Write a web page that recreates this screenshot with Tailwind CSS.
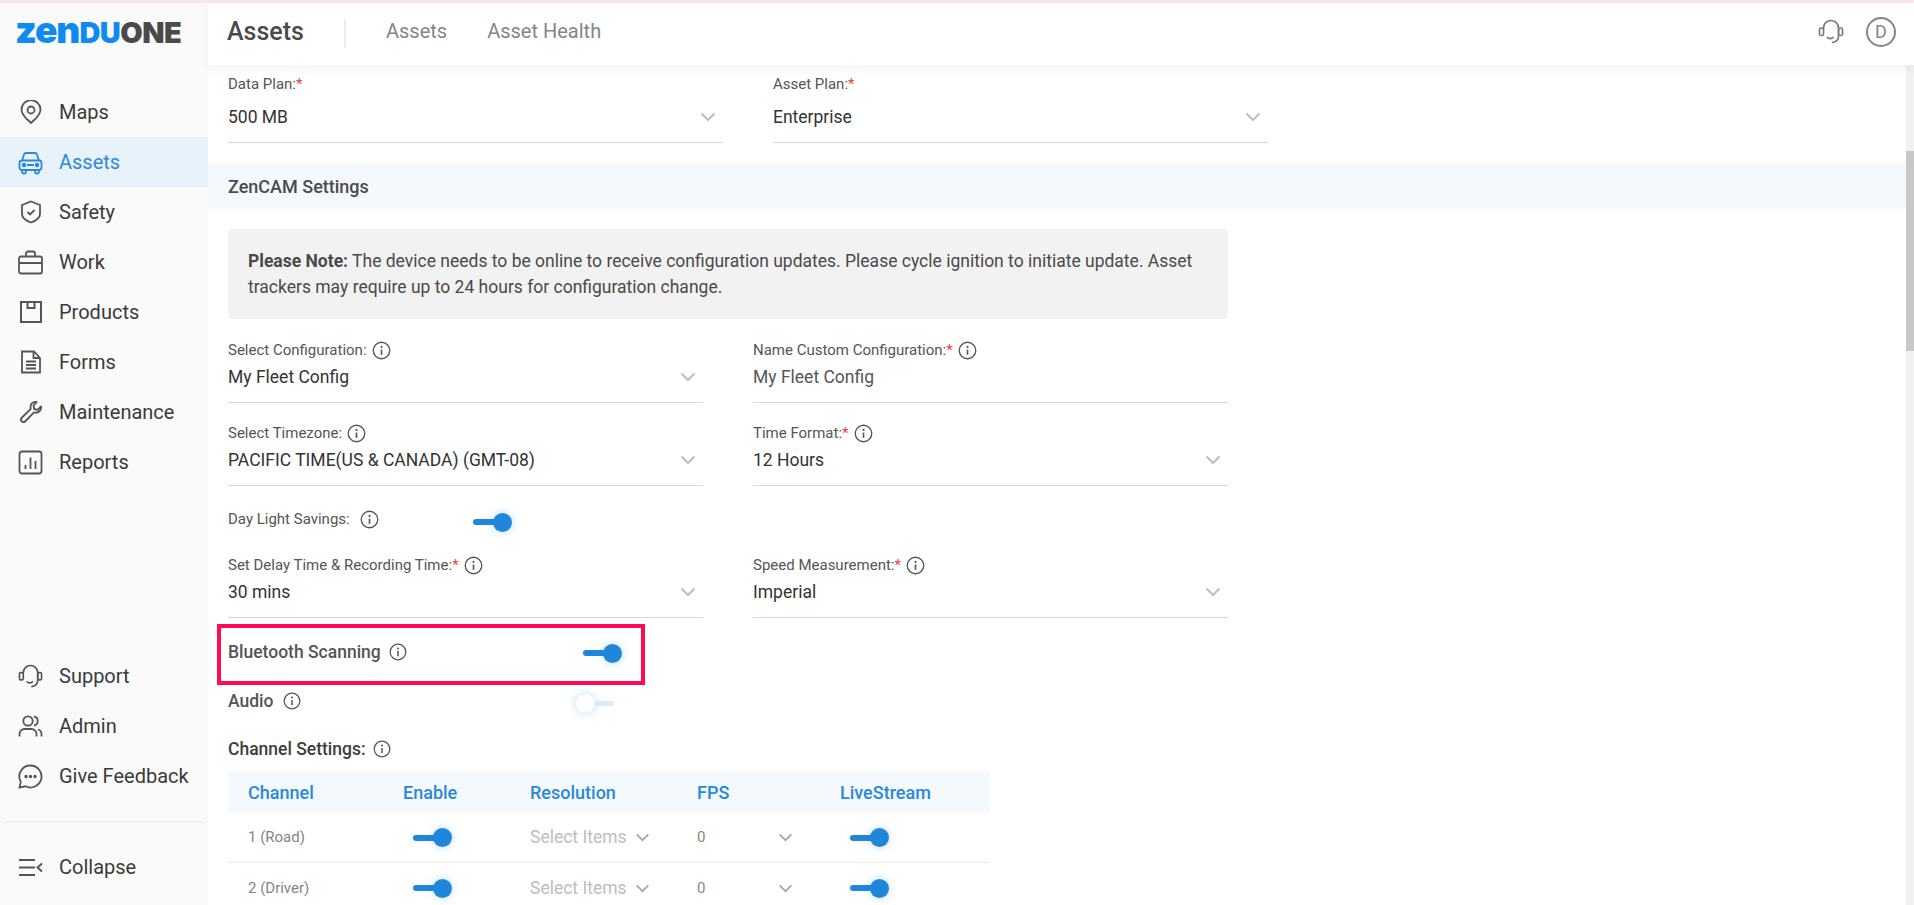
<!DOCTYPE html>
<html lang="en">
<head>
    <meta charset="UTF-8">
    <meta name="viewport" content="width=device-width, initial-scale=1.0">
    <title>Assets - ZenduONE</title>
    <script src="https://cdn.jsdelivr.net/npm/@tailwindcss/browser@4"></script>
</head>
<body class="h-screen overflow-hidden bg-white font-['Roboto',sans-serif] text-[17.5px] text-[#3d3d3d]">
    <svg class="hidden">
        <symbol id="info" viewBox="0 0 20 20">
            <circle cx="10" cy="10" r="8.7" fill="none" stroke="currentColor" stroke-width="1.4"/>
            <circle cx="10" cy="6.2" r="1.1" fill="currentColor"/>
            <path d="M10 9v5.6" stroke="currentColor" stroke-width="1.7" fill="none"/>
        </symbol>
        <symbol id="chev" viewBox="0 0 16 10">
            <path d="M1.5 1.5 8 8l6.5-6.5" fill="none" stroke="currentColor" stroke-width="2"/>
        </symbol>
        <symbol id="headset" viewBox="0 0 26 26">
            <path d="M5.500 10V9a7.500 7.500 0 0 1 15 0v8c0 3.500-2.500 6-6 6.500M9.500 18.500c1.500 1.200 4 1.200 5.500 0" fill="none" stroke="currentColor" stroke-width="1.7" stroke-linecap="round"/>
            <rect x="1.500" y="9" width="4" height="7.500" rx="1.500" fill="none" stroke="currentColor" stroke-width="1.700"/>
            <rect x="20.500" y="9" width="4" height="7.500" rx="1.500" fill="none" stroke="currentColor" stroke-width="1.700"/>
        </symbol>
    </svg>

    <div class="h-[3px] bg-[#fbe4ea]"></div>
    <div class="flex h-[902px]">
        <!-- sidebar -->
        <aside class="w-[208px] shrink-0 flex flex-col bg-[#fafafa] text-[20px] text-[#3a3a3a]">
            <div class="h-[59px] pl-[15px] font-['Inter',sans-serif] font-black leading-[54px] flex items-baseline">
                <span class="text-[#0d8bf2] text-[37px] tracking-[-1px]">zen</span><span class="text-[#0d8bf2] text-[29px] tracking-[-0.5px]">DU</span><span class="text-[#4a4a4a] text-[29px] tracking-[-0.5px]">ONE</span>
            </div>
            <nav class="mt-[25px] flex flex-col">
                <a class="h-[50px] flex items-center pl-[19px] gap-[16px]">
                    <svg class="size-[24px] text-[#555]" viewBox="0 0 24 24" fill="none" stroke="currentColor" stroke-width="1.8"><path d="M12 23c-1-1.500-9.500-7-9.500-13.300a9.500 9.500 0 0 1 19 0C21.500 16 13 21.500 12 23Z"/><circle cx="12" cy="10" r="3.500"/></svg>
                    <span>Maps</span>
                </a>
                <a class="h-[50px] flex items-center pl-[19px] gap-[16px] bg-[#e8f2fb] text-[#2a88dc]">
                    <svg class="size-[25px] -ml-px" viewBox="0 0 25 25" fill="none" stroke="currentColor" stroke-width="1.8"><path d="M4 11l2-6.500c.3-1 1-1.500 2-1.500h9c1 0 1.700.5 2 1.500l2 6.500"/><rect x="1.500" y="10.500" width="22" height="9.500" rx="2.500"/><path d="M4 20v2a1.500 1.500 0 0 0 1.500 1.500h1A1.500 1.500 0 0 0 8 22v-2M17 20v2a1.500 1.500 0 0 0 1.500 1.500h1A1.500 1.500 0 0 0 21 22v-2M9 15h7"/><circle cx="6" cy="15" r="1.300" fill="currentColor"/><circle cx="19" cy="15" r="1.300" fill="currentColor"/></svg>
                    <span>Assets</span>
                </a>
                <a class="h-[50px] flex items-center pl-[19px] gap-[16px]">
                    <svg class="size-[24px] text-[#555]" viewBox="0 0 24 24" fill="none" stroke="currentColor" stroke-width="1.8"><path d="M12 1.500 21 5v9c0 4-4.500 7-9 8.500C7.500 21 3 18 3 14V5Z"/><path d="m8.500 12 2.500 2.500 4.500-4.500"/></svg>
                    <span>Safety</span>
                </a>
                <a class="h-[50px] flex items-center pl-[19px] gap-[16px]">
                    <svg class="size-[25px] -ml-px text-[#555]" viewBox="0 0 25 25" fill="none" stroke="currentColor" stroke-width="1.8"><rect x="1" y="6.500" width="23" height="17" rx="2"/><path d="M8 6.500V3.500c0-1 .7-2 2-2h5c1.300 0 2 1 2 2v3M1 13h23"/></svg>
                    <span>Work</span>
                </a>
                <a class="h-[50px] flex items-center pl-[19px] gap-[16px]">
                    <svg class="size-[24px] text-[#555]" viewBox="0 0 24 24" fill="none" stroke="currentColor" stroke-width="2"><rect x="2" y="2" width="20" height="20"/><path d="M8.500 2v6h7V2"/></svg>
                    <span>Products</span>
                </a>
                <a class="h-[50px] flex items-center pl-[19px] gap-[16px]">
                    <svg class="size-[24px] text-[#555]" viewBox="0 0 24 24" fill="none" stroke="currentColor" stroke-width="1.800"><path d="M3 1.500h12l6 6.500v14.500H3ZM14.500 1.500V8H21M7 11.500h10M7 15h10M7 18.500h10"/></svg>
                    <span>Forms</span>
                </a>
                <a class="h-[50px] flex items-center pl-[19px] gap-[16px]">
                    <svg class="size-[24px] text-[#555]" viewBox="0 0 24 24" fill="none" stroke="currentColor" stroke-width="1.800" stroke-linejoin="round"><path d="M22 6.500c.8 3.500-2.500 7.200-7 5.800L6 21.500c-2 2-5.500-1.500-3.500-3.500l9.300-9.200C10.500 4.500 14 1 17.800 2l-3.300 3.500.7 3.500 3.500.8Z"/></svg>
                    <span>Maintenance</span>
                </a>
                <a class="h-[50px] flex items-center pl-[19px] gap-[16px]">
                    <svg class="size-[25px] -ml-px text-[#555]" viewBox="0 0 25 25" fill="none" stroke="currentColor" stroke-width="1.800"><rect x="1.500" y="1.500" width="22" height="22" rx="2.500"/><path d="M7.500 19v-4M12.500 19V7.500M17.500 19v-8"/></svg>
                    <span>Reports</span>
                </a>
            </nav>
            <div class="mt-auto flex flex-col">
                <a class="h-[50px] flex items-center pl-[19px] gap-[16px]">
                    <svg class="size-[25px] -ml-px text-[#555]"><use href="#headset"/></svg>
                    <span>Support</span>
                </a>
                <a class="h-[50px] flex items-center pl-[19px] gap-[16px]">
                    <svg class="size-[25px] -ml-px text-[#555]" viewBox="0 0 25 25" fill="none" stroke="currentColor" stroke-width="1.800"><circle cx="10" cy="7" r="4.700"/><path d="M1.500 22.500v-2.500c0-3 2.500-5 5-5h7c2.500 0 5 2 5 5v2.500M16 2.500c2.500.6 3.700 2.500 3.700 4.500s-1.200 4-3.700 4.500M20 15.500c2.200.7 3.500 2.500 3.500 4.500v2.500"/></svg>
                    <span>Admin</span>
                </a>
                <a class="h-[50px] flex items-center pl-[19px] gap-[16px]">
                    <svg class="size-[25px] -ml-px text-[#555]" viewBox="0 0 25 25" fill="none" stroke="currentColor" stroke-width="1.800"><path d="M12.500 1.500a11 11 0 1 1-5 20.800L1.500 23.500l1.300-5.500a11 11 0 0 1 9.700-16.500Z"/><circle cx="8" cy="12.500" r=".8" fill="currentColor"/><circle cx="12.500" cy="12.500" r=".8" fill="currentColor"/><circle cx="17" cy="12.500" r=".8" fill="currentColor"/></svg>
                    <span>Give Feedback</span>
                </a>
                <div class="mx-[6px] mt-[20px] mb-[20px] border-t border-[#e8e8e8]"></div>
                <a class="h-[50px] mb-[13px] flex items-center pl-[19px] gap-[16px]">
                    <svg class="size-[25px] -ml-px text-[#555]" viewBox="0 0 25 25" fill="none" stroke="currentColor" stroke-width="2"><path d="M1 5h16M1 12.500h16M1 20h16M24 8.500l-4.500 4 4.500 4"/></svg>
                    <span>Collapse</span>
                </a>
            </div>
        </aside>

        <div class="flex-1 min-w-0 flex flex-col">
            <!-- top bar -->
            <header class="relative z-10 h-[62px] shrink-0 bg-white shadow-[0_4px_10px_rgba(0,0,0,0.05)] flex items-center pl-[19px] pr-[18px]">
                <span class="w-[117px] -mt-[4px] text-[25px] font-medium text-[#4a4a4a]">Assets</span>
                <span class="h-[29px] w-[2px] -mt-[2px] bg-[#ebebeb]"></span>
                <span class="ml-[40px] -mt-[6px] text-[20px] text-[#858585]">Assets</span>
                <span class="ml-[40px] -mt-[6px] text-[20px] text-[#858585]">Asset Health</span>
                <svg class="ml-auto -mt-[4px] size-[26px] text-[#7d7d7d]"><use href="#headset"/></svg>
                <span class="ml-[22px] -mt-[4px] size-[30px] rounded-full border-2 border-[#858585] text-[#858585] text-[18px] leading-[26px] text-center">D</span>
            </header>

            <div class="flex-1 min-h-0 flex">
                <main class="flex-1 min-w-0 overflow-hidden">
                    <!-- plans -->
                    <div class="pl-[20px] pt-[9px] flex gap-[50px]">
                        <div class="w-[495px] h-[69px] border-b border-[#d6d6d6]">
                            <div class="text-[15px] leading-[20px] text-[#555]">Data Plan:<span class="text-[#f0403c]">*</span></div>
                            <div class="mt-[11px] flex items-center justify-between pr-[7px] leading-[24px] text-[#333]">500 MB
                                <svg class="w-[16px] h-[10px] text-[#bdbdbd]"><use href="#chev"/></svg>
                            </div>
                        </div>
                        <div class="w-[495px] h-[69px] border-b border-[#d6d6d6]">
                            <div class="text-[15px] leading-[20px] text-[#555]">Asset Plan:<span class="text-[#f0403c]">*</span></div>
                            <div class="mt-[11px] flex items-center justify-between pr-[7px] leading-[24px] text-[#333]">Enterprise
                                <svg class="w-[16px] h-[10px] text-[#bdbdbd]"><use href="#chev"/></svg>
                            </div>
                        </div>
                    </div>

                    <div class="mt-[20px] h-[46px] bg-[#f4f9fd] pl-[20px] flex items-center text-[18px] font-medium text-[#4a4a4a]">ZenCAM Settings</div>

                    <div class="pl-[20px] pt-[20px] w-[1020px]">
                        <div class="h-[90px] bg-[#f2f2f2] rounded-[4px] px-[20px] pt-[19px] leading-[26px] text-[#4a4a4a]">
                            <b class="font-bold">Please Note:</b> The device needs to be online to receive configuration updates. Please cycle ignition to initiate update. Asset trackers may require up to 24 hours for configuration change.
                        </div>

                        <div class="mt-[21px] grid grid-cols-2 gap-x-[50px]">
                            <div class="h-[63px] border-b border-[#d6d6d6]">
                                <div class="flex items-center gap-[5px] text-[15px] leading-[20px] text-[#555]">Select Configuration: <svg class="size-[19px] text-[#555]"><use href="#info"/></svg></div>
                                <div class="mt-[5px] flex items-center justify-between pr-[7px] leading-[24px] text-[#333]">My Fleet Config
                                    <svg class="w-[16px] h-[10px] text-[#bdbdbd]"><use href="#chev"/></svg>
                                </div>
                            </div>
                            <div class="h-[63px] border-b border-[#d6d6d6]">
                                <div class="flex items-center gap-[5px] text-[15px] leading-[20px] text-[#555]"><span>Name Custom Configuration:<span class="text-[#f0403c]">*</span></span> <svg class="size-[19px] text-[#555]"><use href="#info"/></svg></div>
                                <div class="mt-[5px] leading-[24px] text-[#555]">My Fleet Config</div>
                            </div>
                            <div class="mt-[20px] h-[63px] border-b border-[#d6d6d6]">
                                <div class="flex items-center gap-[5px] text-[15px] leading-[20px] text-[#555]">Select Timezone: <svg class="size-[19px] text-[#555]"><use href="#info"/></svg></div>
                                <div class="mt-[5px] flex items-center justify-between pr-[7px] leading-[24px] text-[#333]">PACIFIC TIME(US &amp; CANADA) (GMT-08)
                                    <svg class="w-[16px] h-[10px] text-[#bdbdbd]"><use href="#chev"/></svg>
                                </div>
                            </div>
                            <div class="mt-[20px] h-[63px] border-b border-[#d6d6d6]">
                                <div class="flex items-center gap-[5px] text-[15px] leading-[20px] text-[#555]"><span>Time Format:<span class="text-[#f0403c]">*</span></span> <svg class="size-[19px] text-[#555]"><use href="#info"/></svg></div>
                                <div class="mt-[5px] flex items-center justify-between pr-[7px] leading-[24px] text-[#333]">12 Hours
                                    <svg class="w-[16px] h-[10px] text-[#bdbdbd]"><use href="#chev"/></svg>
                                </div>
                            </div>
                        </div>

                        <div class="mt-[19px] h-[28px] flex items-center text-[15px] text-[#555]">
                            <span class="w-[132px]">Day Light Savings:</span>
                            <svg class="size-[19px]"><use href="#info"/></svg>
                            <span class="ml-[94px] mt-[6px] inline-flex items-center"><span class="w-[26px] h-[6px] rounded-full bg-[#1f86db]"></span><span class="-ml-[6px] size-[19px] rounded-full bg-[#1f86db] shadow-[0_0_8px_rgba(31,134,219,0.3)]"></span></span>
                        </div>

                        <div class="mt-[22px] grid grid-cols-2 gap-x-[50px]">
                            <div class="h-[63px] border-b border-[#d6d6d6]">
                                <div class="flex items-center gap-[5px] text-[15px] leading-[20px] text-[#555]"><span>Set Delay Time &amp; Recording Time:<span class="text-[#f0403c]">*</span></span> <svg class="size-[19px] text-[#555]"><use href="#info"/></svg></div>
                                <div class="mt-[5px] flex items-center justify-between pr-[7px] leading-[24px] text-[#333]">30 mins
                                    <svg class="w-[16px] h-[10px] text-[#bdbdbd]"><use href="#chev"/></svg>
                                </div>
                            </div>
                            <div class="h-[63px] border-b border-[#d6d6d6]">
                                <div class="flex items-center gap-[5px] text-[15px] leading-[20px] text-[#555]"><span>Speed Measurement:<span class="text-[#f0403c]">*</span></span> <svg class="size-[19px] text-[#555]"><use href="#info"/></svg></div>
                                <div class="mt-[5px] flex items-center justify-between pr-[7px] leading-[24px] text-[#333]">Imperial
                                    <svg class="w-[16px] h-[10px] text-[#bdbdbd]"><use href="#chev"/></svg>
                                </div>
                            </div>
                        </div>

                        <!-- highlighted row -->
                        <div class="relative mt-[19px] h-[30px] flex items-center text-[#555]">
                            <div class="absolute left-[-11px] top-[-13px] w-[428px] h-[61px] border-[4px] border-[#ff0a54]"></div>
                            <span class="font-medium w-[161px]">Bluetooth Scanning</span>
                            <svg class="size-[18px]"><use href="#info"/></svg>
                            <span class="ml-[176px] mt-[2px] inline-flex items-center"><span class="w-[26px] h-[6px] rounded-full bg-[#1f86db]"></span><span class="-ml-[6px] size-[19px] rounded-full bg-[#1f86db] shadow-[0_0_8px_rgba(31,134,219,0.3)]"></span></span>
                        </div>

                        <div class="mt-[19px] h-[30px] flex items-center text-[#555]">
                            <span class="font-medium w-[55px]">Audio</span>
                            <svg class="size-[18px]"><use href="#info"/></svg>
                            <span class="ml-[275px] mt-[4px] inline-flex items-center"><span class="size-[19px] rounded-full bg-white shadow-[0_0_8px_rgba(31,134,219,0.3)]"></span><span class="-ml-px w-[20px] h-[5px] rounded-full bg-[#d9ecfb]"></span></span>
                        </div>

                        <div class="mt-[21px] h-[24px] flex items-center gap-[7px] font-medium text-[#3d3d3d]">
                            Channel Settings: <svg class="size-[18px] text-[#555]"><use href="#info"/></svg>
                        </div>
                    </div>

                    <!-- channel table -->
                    <div class="ml-[20px] mt-[10px] w-[762px]">
                        <div class="h-[42px] bg-[#f4f9fd] grid grid-cols-[155px_127px_167px_143px_150px] items-center pl-[20px] text-[18px] font-medium text-[#2a88dc]">
                            <span>Channel</span><span>Enable</span><span>Resolution</span><span>FPS</span><span>LiveStream</span>
                        </div>
                        <div class="h-[50px] border-b border-[#ececec] grid grid-cols-[165px_117px_167px_153px_140px] items-center pl-[20px] text-[15px] text-[#858585]">
                            <span>1 (Road)</span>
                            <span class="inline-flex items-center"><span class="w-[26px] h-[6px] rounded-full bg-[#1f86db]"></span><span class="-ml-[6px] size-[19px] rounded-full bg-[#1f86db] shadow-[0_0_8px_rgba(31,134,219,0.3)]"></span></span>
                            <span class="flex items-center gap-[8px] text-[17.5px] text-[#bdbdbd]">Select Items <svg class="w-[15px] h-[9px] text-[#a8a8a8]"><use href="#chev"/></svg></span>
                            <span class="flex items-center justify-between pr-[57px]">0 <svg class="w-[15px] h-[9px] text-[#a8a8a8]"><use href="#chev"/></svg></span>
                            <span class="inline-flex items-center"><span class="w-[26px] h-[6px] rounded-full bg-[#1f86db]"></span><span class="-ml-[6px] size-[19px] rounded-full bg-[#1f86db] shadow-[0_0_8px_rgba(31,134,219,0.3)]"></span></span>
                        </div>
                        <div class="h-[50px] grid grid-cols-[165px_117px_167px_153px_140px] items-center pl-[20px] text-[15px] text-[#858585]">
                            <span>2 (Driver)</span>
                            <span class="inline-flex items-center"><span class="w-[26px] h-[6px] rounded-full bg-[#1f86db]"></span><span class="-ml-[6px] size-[19px] rounded-full bg-[#1f86db] shadow-[0_0_8px_rgba(31,134,219,0.3)]"></span></span>
                            <span class="flex items-center gap-[8px] text-[17.5px] text-[#bdbdbd]">Select Items <svg class="w-[15px] h-[9px] text-[#a8a8a8]"><use href="#chev"/></svg></span>
                            <span class="flex items-center justify-between pr-[57px]">0 <svg class="w-[15px] h-[9px] text-[#a8a8a8]"><use href="#chev"/></svg></span>
                            <span class="inline-flex items-center"><span class="w-[26px] h-[6px] rounded-full bg-[#1f86db]"></span><span class="-ml-[6px] size-[19px] rounded-full bg-[#1f86db] shadow-[0_0_8px_rgba(31,134,219,0.3)]"></span></span>
                        </div>
                    </div>
                </main>
                <!-- scrollbar -->
                <div class="w-[8px] shrink-0 bg-[#f1f1f1] pt-[86px]">
                    <div class="h-[200px] bg-[#c8c8c8]"></div>
                </div>
            </div>
        </div>
    </div>
</body>
</html>
